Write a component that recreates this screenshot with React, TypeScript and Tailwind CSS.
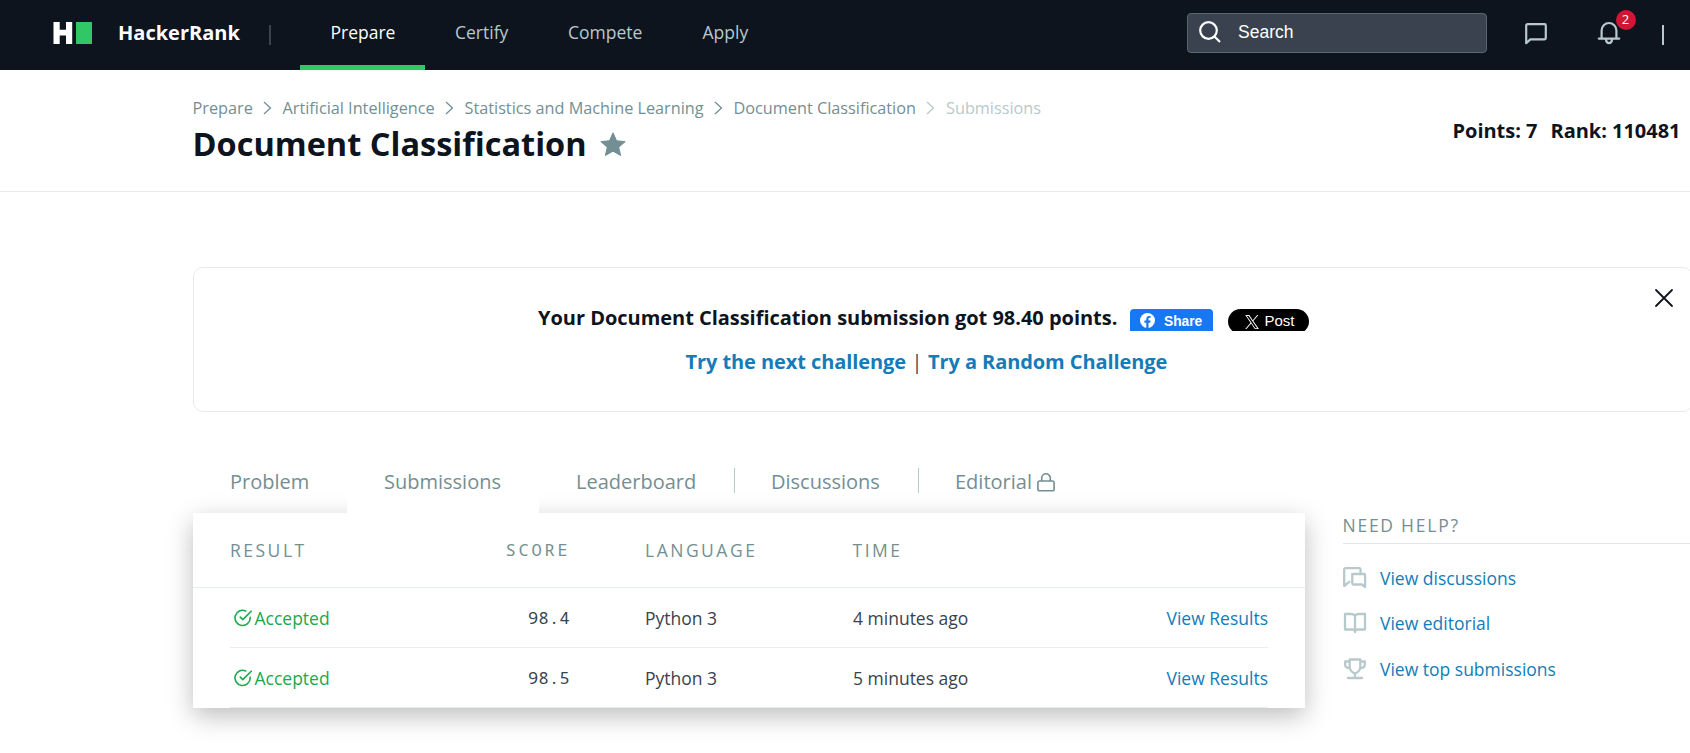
import type { ReactNode } from "react";

const navItems = [
  { label: "Prepare", active: true, cls: "w-[125px] pl-[30.5px]" },
  { label: "Certify", active: false, cls: "w-[113px] pl-[30px]" },
  { label: "Compete", active: false, cls: "w-[135px] pl-[30px]" },
  { label: "Apply", active: false, cls: "w-[110px] pl-[29.5px]" },
];

const crumbs = [
  { label: "Prepare", cls: "w-[90px]" },
  { label: "Artificial Intelligence", cls: "w-[182px]" },
  { label: "Statistics and Machine Learning", cls: "w-[269px]" },
  { label: "Document Classification", cls: "w-[212.5px]" },
];

const rows = [
  { score: "98.4", language: "Python 3", time: "4 minutes ago" },
  { score: "98.5", language: "Python 3", time: "5 minutes ago" },
];

function Header() {
  return (
    <header className="flex h-[70px] items-start bg-[#0e141e]">
      <div className="flex w-[300px] shrink-0 items-start pl-[53px]">
        <svg className="mt-[22px]" width="40" height="22" viewBox="0 0 40 22">
          <path d="M.5 0h6.200v7.800h6.300V0h6.200v22H13v-8.500H6.700V22H.5z" fill="#fff" />
          <path d="M23 0h16v22H23z" fill="#32c766" />
        </svg>
        <span className="ml-[25px] w-[151px] text-[20px] leading-[65px] font-bold text-white">HackerRank</span>
        <span className="mt-[25px] h-5 w-[2px] bg-[#39424e]" />
      </div>
      <nav className="flex">
        {navItems.map((item) => (
          <a
            key={item.label}
            className={`h-[70px] text-[17.5px] leading-[65px] whitespace-nowrap ${item.cls} ${
              item.active ? "border-b-5 border-[#32c766] text-white" : "text-[#b7c9cc]"
            }`}
          >
            {item.label}
          </a>
        ))}
      </nav>
      <div className="mt-[13px] ml-auto flex h-10 w-[300px] items-center rounded-[4px] border border-[#576871] bg-[#39424e] pl-[11px]">
        <svg width="22" height="22" viewBox="0 0 22 22" fill="none" stroke="#fff" strokeWidth="2.200" className="-mt-[3px]">
          <circle cx="9.5" cy="9.5" r="8.300" />
          <path d="M15.5 15.5 21 21" />
        </svg>
        <span className="-mt-[1px] ml-[17px] font-['Liberation_Sans',sans-serif] text-[17.5px] text-white">Search</span>
      </div>
      <svg className="mt-[22px] ml-[37px]" width="24" height="23" viewBox="0 0 24 23" fill="none" stroke="#b7c9cc" strokeWidth="2.200" strokeLinejoin="round">
        <path d="M2.2 21.2V3.500a1.300 1.300 0 0 1 1.300-1.300h17a1.300 1.300 0 0 1 1.300 1.300v12.600a1.300 1.300 0 0 1-1.300 1.300H6.300z" />
      </svg>
      <div className="relative mt-[21px] ml-[48.5px] w-6">
        <svg width="24" height="24" viewBox="0 0 24 24" fill="none" stroke="#b7c9cc" strokeWidth="2.200" strokeLinecap="round" strokeLinejoin="round">
          <path d="M1.800 17.600h20.400M4.600 17.400V9.400a7.400 7.400 0 0 1 14.800 0v8M9 18.600c.3 4.600 5.700 4.600 6 0" />
        </svg>
        <span className="absolute -top-[11px] left-[19px] h-5 w-5 rounded-full bg-[#d11534] text-center text-[13px] leading-[19px] text-white">2</span>
      </div>
      <span className="mt-[25px] mr-[26px] ml-[41.5px] h-5 w-[2px] bg-[#b7c9cc]" />
    </header>
  );
}

function Chevron({ light }: { light?: boolean }) {
  return (
    <svg width="9" height="14" viewBox="0 0 9 14" fill="none" stroke={light ? "#b7c9cc" : "#738f93"} strokeWidth="1.3">
      <path d="M1 1l6.500 6L1 13" />
    </svg>
  );
}

function PageHead() {
  return (
    <section className="flex h-[122px] justify-between border-b border-[#e7eaeb] pl-[192.500px]">
      <div className="pt-[26px]">
        <div className="flex h-6 text-[16.25px] leading-6 text-[#738f93]">
          {crumbs.map((c, i) => (
            <span key={c.label} className={`flex items-center justify-between pr-[11px] whitespace-nowrap ${c.cls}`}>
              {c.label}
              <Chevron light={i === 3} />
            </span>
          ))}
          <span className="text-[#b7c9cc]">Submissions</span>
        </div>
        <div className="flex">
          <h1 className="w-[407.500px] text-[32.5px] leading-[47px] font-bold whitespace-nowrap text-[#0e141e]">Document Classification</h1>
          <svg className="mt-[12px]" width="26" height="24" viewBox="0 0 26 24" fill="#738f93" stroke="#738f93" strokeLinejoin="round">
            <path d="M13 .8l3.6 8 8.6.8-6.5 5.700 2 8.200L13 19.200l-7.700 4.300 2-8.200L.8 9.600l8.600-.8z" />
          </svg>
        </div>
      </div>
      <div className="flex pt-[46px] text-[20px] leading-[30px] font-bold tracking-[-0.03px] whitespace-nowrap text-[#0e141e]">
        <span className="w-[98px]">Points: 7</span>
        <span className="w-[139.500px]">Rank: 110481</span>
      </div>
    </section>
  );
}

function ResultCard() {
  return (
    <section className="relative mt-[75px] ml-[193px] h-[145px] w-[1500px] rounded-[10px] border border-[#e7eaeb] pt-[35px] text-[20px] font-bold tracking-[-0.03px] whitespace-nowrap">
      <div className="flex h-[30px] pl-[344px] leading-[30px] text-[#0e141e]">
        <span className="w-[592px]">Your Document Classification submission got 98.40 points.</span>
        <span className="mt-[6px] flex h-[22px] w-[83px] overflow-hidden rounded-t-[4px] bg-[#1877f2] pl-[10px] font-['Liberation_Sans',sans-serif] text-[13.75px] leading-[25px] font-bold text-white">
          <svg className="mt-[4px] mr-[9px]" width="15" height="15" viewBox="0 0 15 15">
            <circle cx="7.5" cy="7.5" r="7.5" fill="#fff" />
            <path d="M6.3 15V9.7H4.4V7.5h1.9V5.9c0-2 1.1-3 2.9-3l1.5.1v1.8h-.9c-1 0-1.3.6-1.3 1.2v1.5h2.1l-.4 2.2H8.5V15z" fill="#1877f2" />
          </svg>
          Share
        </span>
        <span className="mt-[6px] ml-[15px] h-[22px] w-[81px] overflow-hidden">
          <span className="flex h-[25px] w-[81px] rounded-full bg-black pl-[17px] font-['Liberation_Sans',sans-serif] text-[15px] leading-[24px] font-normal text-white">
            <svg className="mt-[6px] mr-[5.500px]" width="14" height="14" viewBox="0 0 24 24" fill="#fff">
              <path d="M14.3 10.2 23 0h-2.100l-7.500 8.800L7.400 0H.4l9.100 13.300L.4 24h2.100l8-9.300 6.400 9.300h7zm-2.800 3.300-.9-1.300L3.200 1.600h3.200l5.900 8.500.9 1.300 7.700 11.100h-3.200z" />
            </svg>
            Post
          </span>
        </span>
      </div>
      <div className="mt-[14px] flex pl-[491.500px] leading-[30px] tracking-[-0.080px] text-[#137cb9]">
        <a>Try the next challenge</a>
        <span className="w-[22px] text-center font-normal text-[#39424e]">|</span>
        <a>Try a Random Challenge</a>
      </div>
      <svg className="absolute top-[19.500px] left-[1459.500px]" width="20" height="20" viewBox="0 0 20 20" stroke="#0e141e" strokeWidth="1.8" strokeLinecap="round">
        <path d="M2 2l16 16M18 2 2 18" />
      </svg>
    </section>
  );
}

function CheckIcon() {
  return (
    <svg className="mt-[21px] mr-[2.500px] ml-[4px]" width="18" height="18" viewBox="0 0 18 18" fill="none" stroke="#1ba94c" strokeWidth="1.600" strokeLinecap="round" strokeLinejoin="round">
      <path d="M16.200 8.200v.8A7.600 7.600 0 1 1 11.700 2M17.200 2.200 8.800 10.600 6.300 8.100" />
    </svg>
  );
}

function Tabs() {
  return (
    <div className="flex h-[76px] text-[20px] leading-[90px] whitespace-nowrap text-[#738f93]">
      <a className="w-[154px] pl-[37px]">Problem</a>
      <a className="relative z-10 h-[78px] w-[192px] bg-white pl-[37px]">Submissions</a>
      <a className="w-[195px] pl-[37px]">Leaderboard</a>
      <span className="mt-[31px] h-[25px] w-px bg-[#b7c9cc]" />
      <a className="w-[183px] pl-[36px]">Discussions</a>
      <span className="mt-[31px] h-[25px] w-px bg-[#b7c9cc]" />
      <a className="flex pl-[36px]">
        <span className="w-[82px]">Editorial</span>
        <svg className="mt-[36px]" width="18" height="20" viewBox="0 0 18 20" fill="none" stroke="#738f93" strokeWidth="1.600">
          <rect x=".9" y="8" width="16.200" height="9.700" rx="1.800" />
          <path d="M4.700 8V5.100a4.300 4.300 0 0 1 8.600 0V8" />
        </svg>
      </a>
    </div>
  );
}

function SubmissionsTable() {
  return (
    <div className="h-[195px] w-[1112px] bg-white text-[17.5px] whitespace-nowrap shadow-[0_8px_24px_rgba(0,0,0,0.26)]">
      <div className="flex h-[75px] border-b border-[#e7eeef] pl-[37px] leading-[74px] tracking-[2.500px] text-[#738f93]">
        <span className="w-[275.500px]">RESULT</span>
        <span className="w-[139.500px] font-['Noto_Sans_Mono','Liberation_Mono',monospace] text-[17px] tracking-[2.800px]">SCORE</span>
        <span className="w-[207.500px]">LANGUAGE</span>
        <span>TIME</span>
      </div>
      {rows.map((r) => (
        <div key={r.score} className="mr-[37px] ml-[37px] flex h-[60px] border-b border-[#e7eeef] leading-[61px] text-[#39424e]">
          <span className="flex w-[298px] items-start text-[#1ba94c]">
            <CheckIcon />
            Accepted
          </span>
          <span className="w-[117px] font-['Noto_Sans_Mono','Liberation_Mono',monospace] text-[17px] leading-[60px] tracking-[0.300px]">{r.score}</span>
          <span className="w-[208px]">{r.language}</span>
          <span>{r.time}</span>
          <a className="ml-auto text-[#137cb9]">View Results</a>
        </div>
      ))}
    </div>
  );
}

function HelpIcon({ children }: { children: ReactNode }) {
  return (
    <svg width="24" height="24" viewBox="0 0 24 24" fill="none" stroke="#b7c9cc" strokeWidth="2.300" strokeLinecap="round" strokeLinejoin="round">
      {children}
    </svg>
  );
}

function Help() {
  return (
    <aside className="ml-[37.500px] flex-1 pt-[75px] text-[17.5px] whitespace-nowrap">
      <h2 className="h-[32px] border-b border-[#dde8ea] leading-[27px] tracking-[1.750px] text-[#738f93]">NEED HELP?</h2>
      <ul className="pt-[11px] text-[#137cb9]">
        <li className="flex h-[45.500px] items-center gap-[13.500px]">
          <HelpIcon>
            <path d="M17.500 6V3.300a1.200 1.200 0 0 0-1.200-1.200H2.500a1.300 1.300 0 0 0-1.300 1.300V20l5.300-4.300M9.300 8h11.800a1 1 0 0 1 1 1v12l-3-2.500H10.300a1 1 0 0 1-1-1z" />
          </HelpIcon>
          View discussions
        </li>
        <li className="flex h-[45.500px] items-center gap-[13.500px]">
          <HelpIcon>
            <path d="M12 4.500C11 3.300 9.500 3 8 3H2v15.500h7c1.500 0 2.500.7 3 1.700.5-1 1.500-1.700 3-1.700h7V3h-6c-1.500 0-3 .3-4 1.500zM12 4.500V21" />
          </HelpIcon>
          View editorial
        </li>
        <li className="flex h-[45.500px] items-center gap-[13.500px]">
          <HelpIcon>
            <path d="M6.700 2.500h10.600V10c0 3-2.300 5.300-5.300 6.500C9 15.300 6.700 13 6.700 10zM6.500 4.500H2.200V8c0 1.800 1.800 3 4.500 3M17.500 4.500h4.300V8c0 1.800-1.800 3-4.500 3M12 16.500V21M5 21h14" />
          </HelpIcon>
          View top submissions
        </li>
      </ul>
    </aside>
  );
}

export default function App() {
  return (
    <div className="h-[753px] w-[1690px] overflow-hidden bg-white font-['Open_Sans',sans-serif]">
      <Header />
      <PageHead />
      <ResultCard />
      <main className="mt-[25px] flex pl-[193px]">
        <div>
          <Tabs />
          <SubmissionsTable />
        </div>
        <Help />
      </main>
    </div>
  );
}
